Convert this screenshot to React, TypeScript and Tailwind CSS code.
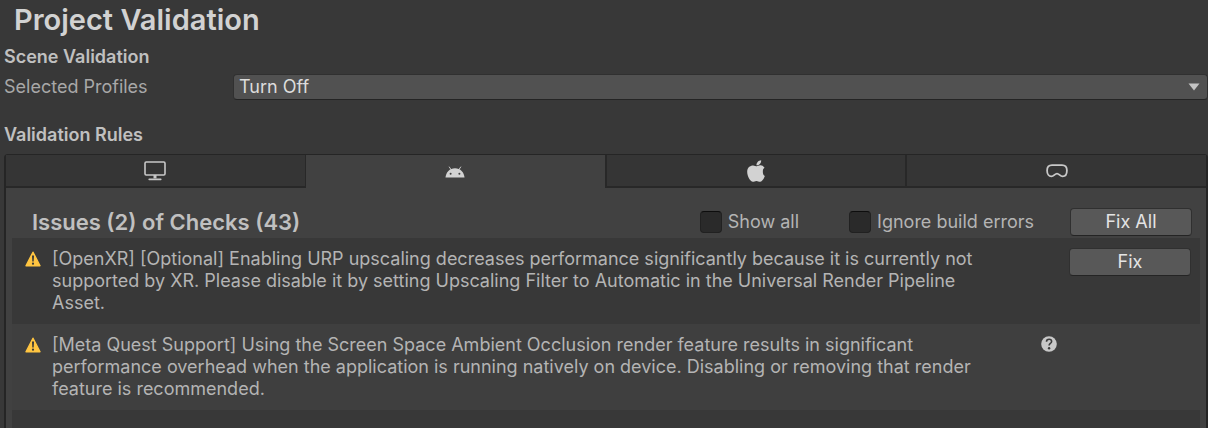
import React, { useState } from "react";
import clsx from "clsx";

type Issue = {
  id: string;
  message: string;
  fixable: boolean;
};

const issues: Issue[] = [
  {
    id: "urp-upscaling",
    message:
      "[OpenXR] [Optional] Enabling URP upscaling decreases performance significantly because it is currently not supported by XR. Please disable it by setting Upscaling Filter to Automatic in the Universal Render Pipeline Asset.",
    fixable: true,
  },
  {
    id: "ssao",
    message:
      "[Meta Quest Support] Using the Screen Space Ambient Occlusion render feature results in significant performance overhead when the application is running natively on device. Disabling or removing that render feature is recommended.",
    fixable: false,
  },
];

function DesktopIcon() {
  return (
    <svg width="22" height="20" viewBox="0 0 22 20" fill="none" aria-hidden="true">
      <rect x="1" y="1" width="20" height="13" rx="1.2" stroke="#c8c8c8" strokeWidth="1.6" />
      <path d="M9.5 14h3v3.4h-3z" fill="#c8c8c8" />
      <path d="M5.2 18.4h11.6" stroke="#c8c8c8" strokeWidth="1.6" strokeLinecap="round" />
    </svg>
  );
}

function AndroidIcon() {
  return (
    <svg width="20" height="12" viewBox="0 0 20 12" aria-hidden="true">
      <path d="M4.3 1l2 3M15.7 1l-2 3" stroke="#c8c8c8" strokeWidth="1" strokeLinecap="round" />
      <path d="M.5 11.5C.9 6.3 4.6 2.2 10 2.2s9.100 4.100 9.500 9.300z" fill="#d2d2d2" />
      <circle cx="5.6" cy="7.8" r="1" fill="#414141" />
      <circle cx="14.4" cy="7.8" r="1" fill="#414141" />
    </svg>
  );
}

function AppleIcon() {
  return (
    <svg width="18" height="22" viewBox="0 28 384 456" preserveAspectRatio="none" aria-hidden="true">
      <path
        fill="#d2d2d2"
        d="M338 268.700c-.2-36.700 6-58.400 36-78.800-18.800-26.900-45.200-47.700-82.700-50.600-35.500-2.800-68.300 20.700-82.500 20.700-15 0-49.400-19.700-76.400-19.700C63.300 141.200 4 184.800 4 273.500q0 39.300 14.400 81.200c12.800 36.700 59 126.700 107.200 125.200 25.200-.6 43-17.900 75.800-17.900 31.800 0 48.300 17.900 76.400 17.900 48.600-.7 90.400-82.500 102.600-119.300-34-16-42-50-42.400-91.900zm-60-164.200c27.300-32.400 24.800-61.900 24-72.500-24.100 1.400-60 16.400-75.900 34.900-17.500 19.800-27.800 44.300-25.600 71.900 26.100 2 57.900-11.400 77.500-34.300z"
      />
    </svg>
  );
}

function HeadsetIcon() {
  return (
    <svg width="22" height="14" viewBox="0 0 22 14" fill="none" aria-hidden="true">
      <path
        d="M6 1.200h10c3.400 0 4.900 1.900 4.900 5.300 0 3.700-1.700 5.900-4.300 5.900-2.600 0-3.400-2.800-5.600-2.800s-3 2.800-5.600 2.800c-2.600 0-4.300-2.200-4.300-5.900C1.100 3.100 2.600 1.200 6 1.200z"
        stroke="#c8c8c8"
        strokeWidth="1.8"
      />
    </svg>
  );
}

function WarningIcon() {
  return (
    <svg className="mt-[3px] shrink-0" width="16" height="16" viewBox="0 0 16 16" aria-label="Warning">
      <path
        d="M8 1.200L15 14.700H1z"
        fill="#ffc541"
        stroke="#ffc541"
        strokeWidth="1.4"
        strokeLinejoin="round"
      />
      <path d="M7 4.500h2l-.3 6H7.300z" fill="#383838" />
      <circle cx="8" cy="12.7" r="1.1" fill="#383838" />
    </svg>
  );
}

function HelpIcon() {
  return (
    <svg width="16" height="16" viewBox="0 0 16 16" fill="none" aria-hidden="true">
      <circle cx="8" cy="8" r="7.8" fill="#c8c8c8" />
      <path
        d="M5.500 5.800c0-1.600 1.100-2.500 2.600-2.500s2.500.9 2.500 2.200c0 2-2.500 1.900-2.500 4"
        stroke="#3c3c3c"
        strokeWidth="1.6"
      />
      <circle cx="8.1" cy="12.2" r="1.2" fill="#3c3c3c" />
    </svg>
  );
}

const tabs = [
  { id: "desktop", label: "Desktop", Icon: DesktopIcon },
  { id: "android", label: "Android", Icon: AndroidIcon },
  { id: "ios", label: "iOS", Icon: AppleIcon },
  { id: "quest", label: "Headset", Icon: HeadsetIcon },
];

function ActionButton({ children }: { children: React.ReactNode }) {
  return (
    <button
      type="button"
      className="h-7 w-full rounded-sm border border-[#303030] border-b-[#242424] bg-[#585858] text-lg leading-6 text-[#e4e4e4] hover:bg-[#676767]"
    >
      {children}
    </button>
  );
}

function Toggle({ label }: { label: string }) {
  return (
    <label className="flex items-center gap-1.5 whitespace-nowrap">
      <input
        type="checkbox"
        className="size-[22px] appearance-none rounded-sm border border-[#212121] border-t-[#0d0d0d] bg-[#2a2a2a] checked:bg-[#585858]"
      />
      {label}
    </label>
  );
}

function App() {
  const [activeTab, setActiveTab] = useState("android");

  return (
    <div className="flex min-h-screen flex-col bg-[#383838] font-['Inter',sans-serif] text-lg leading-[22px] text-[#b4b4b4]">
      <h1 className="pt-1 pl-3.5 text-[29px] leading-8 font-semibold text-[#d2d2d2]">
        Project Validation
      </h1>

      <h2 className="mt-2.5 pl-1 font-semibold text-[#c0c0c0]">Scene Validation</h2>
      <div className="mt-1.5 flex items-center pl-1">
        <label htmlFor="profiles" className="w-[229px] shrink-0 text-[#a8a8a8]">
          Selected Profiles
        </label>
        <div className="relative flex-1">
          <select
            id="profiles"
            className="block h-[26px] w-full appearance-none rounded-sm border border-[#303030] border-b-[#242424] bg-[#515151] pl-[5px] text-[#dcdcdc]"
          >
            <option>Turn Off</option>
          </select>
          <svg
            className="pointer-events-none absolute top-[9px] right-2"
            width="12"
            height="8"
            viewBox="0 0 12 8"
            aria-hidden="true"
          >
            <path d="M.5.5h11L6 7.500z" fill="#c4c4c4" />
          </svg>
        </div>
      </div>

      <h2 className="mt-6 pl-1 font-semibold text-[#c0c0c0]">Validation Rules</h2>

      <div className="mt-2 ml-1 flex flex-1 flex-col rounded-t-sm border-x-2 border-t border-[#252525] bg-[#414141]">
        <div role="tablist" className="flex">
          {tabs.map(({ id, label, Icon }, index) => (
            <button
              key={id}
              type="button"
              role="tab"
              aria-label={label}
              aria-selected={activeTab === id}
              onClick={() => setActiveTab(id)}
              className={clsx(
                "flex h-[33px] flex-1 items-center justify-center border-[#282828]",
                activeTab === id ? "bg-[#414141]" : "border-b-2 bg-[#353535]",
                index > 0 && activeTab !== id && "border-l-2",
                tabs[index + 1]?.id === activeTab && "border-r"
              )}
            >
              <Icon />
            </button>
          ))}
        </div>

        <div className="flex items-center pt-5 pr-3.5 pb-0.5 pl-[26px]">
          <h3 className="flex-1 text-[22px] leading-7 font-semibold text-[#c0c0c0]">
            Issues (2) of Checks (43)
          </h3>
          <div className="mr-9 flex gap-[50px]">
            <Toggle label="Show all" />
            <Toggle label="Ignore build errors" />
          </div>
          <div className="w-[122px]">
            <ActionButton>Fix All</ActionButton>
          </div>
        </div>

        <ul className="mx-1.5 flex flex-1 flex-col">
          {issues.map((issue) => (
            <li
              key={issue.id}
              className="flex items-start py-2.5 pr-[9px] pl-[13px] odd:bg-[#383838] even:bg-[#3f3f3f]"
            >
              <WarningIcon />
              <p className="ml-[11px] max-w-[946px] flex-1">{issue.message}</p>
              <div className="ml-auto flex shrink-0">
                {issue.fixable ? (
                  <div className="w-[122px]">
                    <ActionButton>Fix</ActionButton>
                  </div>
                ) : (
                  <button type="button" aria-label="Documentation" className="mt-0.5 mr-[134px]">
                    <HelpIcon />
                  </button>
                )}
              </div>
            </li>
          ))}
          <li className="flex-1 bg-[#383838]" aria-hidden="true" />
        </ul>
      </div>
    </div>
  );
}

export default App;
